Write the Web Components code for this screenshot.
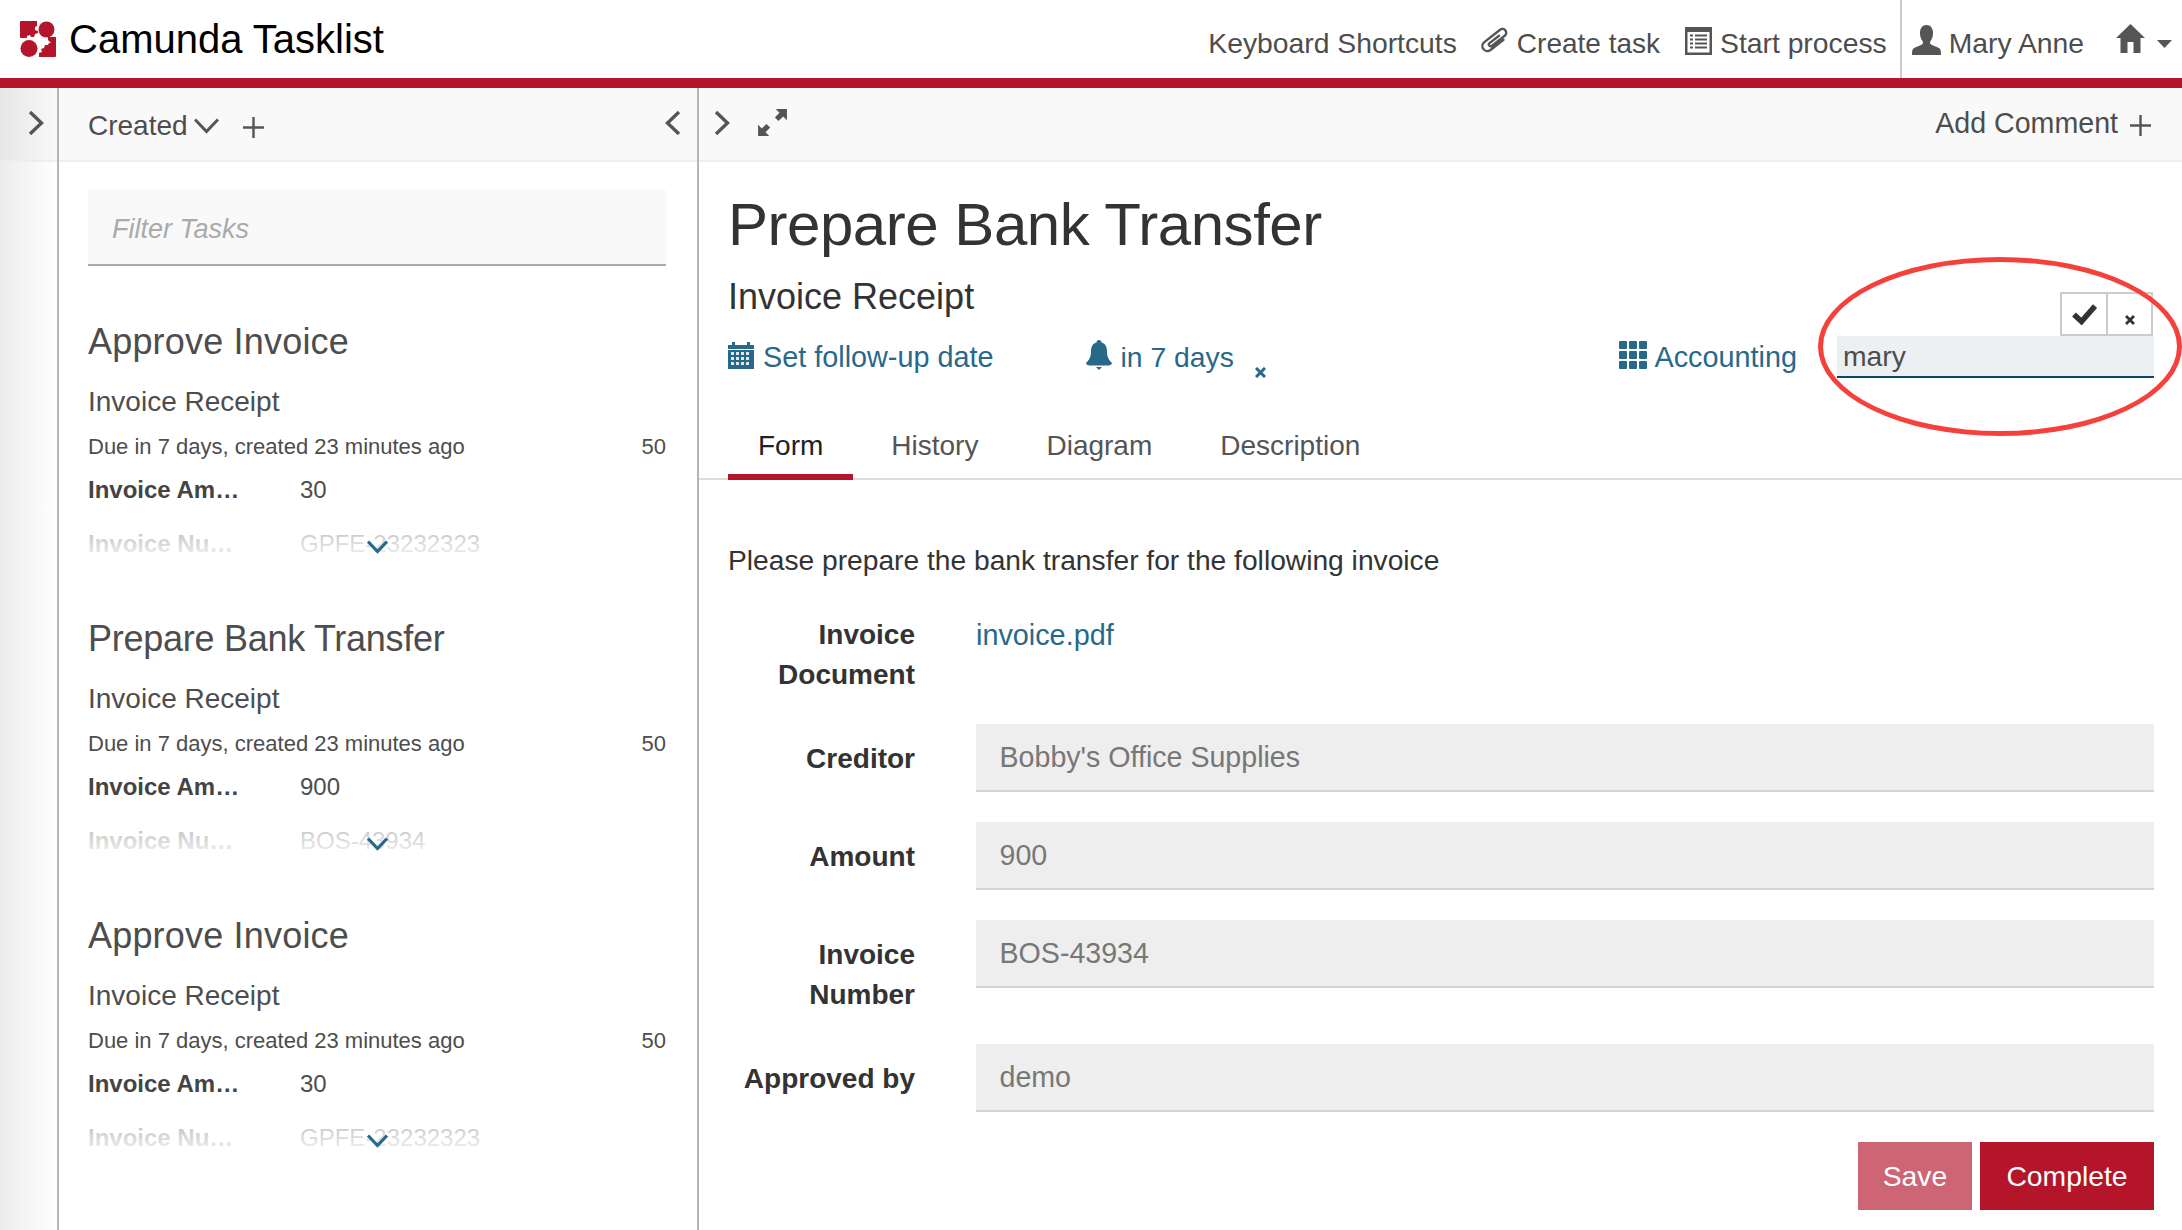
<!DOCTYPE html>
<html lang="en">
<head>
<meta charset="utf-8">
<title>Camunda Tasklist</title>
<style>
    html, body { margin: 0; height: 100%; }
    body {
        width: 2182px;
        height: 1230px;
        overflow: hidden;
        font-family: "Liberation Sans", Arial, sans-serif;
        font-size: 28.3px;
        color: #444;
        background: #fff;
    }
</style>
</head>
<body>
<cam-navbar></cam-navbar>
<cam-layout>
    <cam-tasklist slot="list">
        <cam-task-card name="Approve Invoice" track="0.19" amount="30" number="GPFE-23232323"></cam-task-card>
        <cam-task-card name="Prepare Bank Transfer" track="-0.27" amount="900" number="BOS-43934"></cam-task-card>
        <cam-task-card name="Approve Invoice" track="0.19" amount="30" number="GPFE-23232323"></cam-task-card>
    </cam-tasklist>
    <cam-task-detail slot="detail">
        <cam-field label="Invoice<br>Document" link="invoice.pdf"></cam-field>
        <cam-field label="Creditor" value="Bobby's Office Supplies"></cam-field>
        <cam-field label="Amount" value="900"></cam-field>
        <cam-field label="Invoice<br>Number" value="BOS-43934"></cam-field>
        <cam-field label="Approved by" value="demo"></cam-field>
    </cam-task-detail>
</cam-layout>

<script>
const RED = "#b5152b";
const LINK = "#28698a";

const ICONS = {
    logo: `<svg width="36" height="36" viewBox="0 0 36 36"><path fill="${RED}" d="M1 0h16v5l-2 1v3l3 1v2l-3 1-1 3h-3l-1-2-3 1v2H1a1 1 0 0 1-1-1V1a1 1 0 0 1 1-1z"/><circle cx="26.500" cy="8.500" r="8" fill="${RED}"/><circle cx="9" cy="27.500" r="8.500" fill="${RED}"/><path fill="${RED}" d="M28 16h8v19a1 1 0 0 1-1 1H19v-4l3-1-1-3 3-1 1-3h3l1-2 2 0-3-3z"/></svg>`,
    clip: `<svg width="31" height="31" viewBox="0 0 31 31"><g transform="rotate(52 15.500 15.500)" fill="none" stroke="#555" stroke-width="2.400" stroke-linecap="round"><path d="M20.500 8v16.500a5 5 0 0 1-10 0V4.500a3.800 3.800 0 0 1 7.600 0V21a1.800 1.800 0 0 1-3.600 0V9"/></g></svg>`,
    list: `<svg width="27" height="28" viewBox="0 0 27 28"><rect width="27" height="28" fill="#555"/><rect x="2.500" y="5" width="22" height="20.500" fill="#fff"/><g fill="#555"><rect x="5" y="7.500" width="3" height="2"/><rect x="5" y="11.500" width="3" height="2"/><rect x="5" y="15.500" width="3" height="2"/><rect x="5" y="19.500" width="3" height="2"/><rect x="10" y="7.500" width="12" height="2"/><rect x="10" y="11.500" width="12" height="2"/><rect x="10" y="15.500" width="12" height="2"/><rect x="10" y="19.500" width="12" height="2"/></g></svg>`,
    user: `<svg width="29" height="30" viewBox="0 0 31 30" preserveAspectRatio="none"><path fill="#555" d="M15.500 0c4.500 0 7 3.500 7 8 0 3.500-1.300 6.500-2.800 8.300-.6.800-.5 2.400.3 3 1.800 1.300 7 2.500 9.500 4.200 1 .7 1.500 2.500 1.500 6.500H0c0-4 .5-5.800 1.500-6.500 2.500-1.700 7.700-2.900 9.500-4.200.8-.6.900-2.200.3-3C9.800 14.500 8.500 11.500 8.500 8c0-4.500 2.500-8 7-8z"/></svg>`,
    home: `<svg width="29" height="29" viewBox="0 0 29 29"><path fill="#555" d="M14.500 0 29 14h-4.500v15H17.500V18h-6v11H4.500V14H0z"/></svg>`,
    caret: `<svg width="15" height="8" viewBox="0 0 15 8"><path fill="#555" d="M0 0h15L7.500 8z"/></svg>`,
    right: `<svg width="16" height="24" viewBox="0 0 16 24"><path fill="none" stroke="#555" stroke-width="3.400" d="M2 1l11.500 11L2 23"/></svg>`,
    left: `<svg width="16" height="24" viewBox="0 0 16 24"><path fill="none" stroke="#555" stroke-width="3.400" d="M14 1 2.500 12 14 23"/></svg>`,
    down: `<svg width="25" height="16" viewBox="0 0 25 16"><path fill="none" stroke="#555" stroke-width="3" d="M1 1.500l11.500 12 11.500-12"/></svg>`,
    plus: `<svg width="21" height="21" viewBox="0 0 21 21"><path fill="none" stroke="#555" stroke-width="2.400" d="M10.500 0v21M0 10.500h21"/></svg>`,
    expand: `<svg width="29" height="27" viewBox="0 0 31 29"><g fill="#555"><path d="M31 0v12l-4-4-5 5-4-4 5-5-4-4z"/><path d="M0 29V17l4 4 5-5 4 4-5 5 4 4z"/></g></svg>`,
    calendar: `<svg width="26" height="28" viewBox="0 0 26 28"><path fill="${LINK}" d="M0 4h4V1h3v3h12V1h3v3h4v4H0z"/><path fill="${LINK}" d="M0 9h26v19H0z"/><g fill="#fff" opacity=".85"><rect x="3" y="11" width="3" height="3"/><rect x="8" y="11" width="3" height="3"/><rect x="13" y="11" width="3" height="3"/><rect x="18" y="11" width="3" height="3"/><rect x="3" y="16" width="3" height="3"/><rect x="8" y="16" width="3" height="3"/><rect x="13" y="16" width="3" height="3"/><rect x="18" y="16" width="3" height="3"/><rect x="3" y="21" width="3" height="3"/><rect x="8" y="21" width="3" height="3"/><rect x="13" y="21" width="3" height="3"/><rect x="18" y="21" width="3" height="3"/></g></svg>`,
    bell: `<svg width="26" height="30" viewBox="0 0 26 30"><path fill="${LINK}" d="M13 0c1.500 0 2.500 1 2.500 2.500 4 1 5.500 4.500 5.500 9 0 5 1.500 8 5 11.500 0 1-1 2-3 2.500H3c-2-.5-3-1.500-3-2.500C3.500 19.500 5 16.500 5 11.500c0-4.500 1.500-8 5.500-9C10.500 1 11.500 0 13 0z"/><path fill="${LINK}" d="M10 27h6l-3 3z"/></svg>`,
    grid: `<svg width="28" height="28" viewBox="0 0 28 28"><g fill="${LINK}"><rect width="8" height="8" rx="1"/><rect x="10" width="8" height="8" rx="1"/><rect x="20" width="8" height="8" rx="1"/><rect y="10" width="8" height="8" rx="1"/><rect x="10" y="10" width="8" height="8" rx="1"/><rect x="20" y="10" width="8" height="8" rx="1"/><rect y="20" width="8" height="8" rx="1"/><rect x="10" y="20" width="8" height="8" rx="1"/><rect x="20" y="20" width="8" height="8" rx="1"/></g></svg>`,
    "x-link": `<svg width="11" height="11" viewBox="0 0 11 11"><path fill="none" stroke="${LINK}" stroke-width="3" d="M1 1l9 9M10 1l-9 9"/></svg>`,
    check: `<svg width="25" height="21" viewBox="0 0 25 21"><path fill="none" stroke="#333" stroke-width="5.500" d="M2 10.500l7.500 7L23 2"/></svg>`,
    x: `<svg width="10" height="10" viewBox="0 0 10 10"><path fill="none" stroke="#333" stroke-width="2.800" d="M1 1l8 8M9 1L1 9"/></svg>`,
    "chevron-teal": `<svg width="21" height="14" viewBox="0 0 21 14"><path fill="none" stroke="${LINK}" stroke-width="3.200" d="M1 1.500l9.500 10 9.500-10"/></svg>`
};

class CamIcon extends HTMLElement
{
    connectedCallback() {
        if (this.shadowRoot) return;
        const Shadow = this.attachShadow({mode: "open"});
        Shadow.innerHTML = `
            <style>
                :host { display: inline-flex; flex: none; }
                svg { display: block; }
            </style>
            ${ICONS[this.getAttribute("name")]}
        `;
    }
}

class Navbar extends HTMLElement
{
    constructor() {
        super();
        const Shadow = this.attachShadow({mode: "open"});
        Shadow.innerHTML = `
            <style>
                :host {
                    display: flex;
                    align-items: center;
                    height: 78px;
                    border-bottom: 10px solid ${RED};
                    background: #fff;
                }
                .brand { display: flex; align-items: center; padding-left: 20px; gap: 13px; }
                .title { font-size: 40px; color: #000; line-height: 78px; }
                .menu {
                    display: flex;
                    align-items: stretch;
                    height: 100%;
                    margin-left: auto;
                    padding-right: 10px;
                    color: #4d4d4d;
                }
                .item { display: flex; align-items: center; padding-top: 9px; box-sizing: border-box; white-space: nowrap; }
                .clip { margin-left: 22px; gap: 7px; font-size: 28px; }
                .proc { margin-left: 25px; gap: 8px; }
                .proc cam-icon, .clip cam-icon { position: relative; top: -3px; }
                .user { margin-left: 13px; border-left: 2px solid #ccc; padding-left: 10px; gap: 8px; }
                .user cam-icon { position: relative; top: -4px; }
                .home { margin-left: 32px; gap: 12px; }
                .home cam-icon:first-child { position: relative; top: -5px; }
            </style>
            <div class="brand"><cam-icon name="logo"></cam-icon><span class="title">Camunda Tasklist</span></div>
            <div class="menu">
                <div class="item">Keyboard Shortcuts</div>
                <div class="item clip"><cam-icon name="clip"></cam-icon>Create task</div>
                <div class="item proc"><cam-icon name="list"></cam-icon>Start process</div>
                <div class="item user"><cam-icon name="user"></cam-icon>Mary Anne</div>
                <div class="item home"><cam-icon name="home"></cam-icon><cam-icon name="caret"></cam-icon></div>
            </div>
        `;
    }
}

class Layout extends HTMLElement
{
    constructor() {
        super();
        const Shadow = this.attachShadow({mode: "open"});
        Shadow.innerHTML = `
            <style>
                :host { display: flex; height: 1142px; overflow: hidden; }
                .strip {
                    flex: none;
                    width: 57px;
                    border-right: 2px solid #b4b4b4;
                    background: linear-gradient(to right, #ececec, #fff);
                }
                .strip-bar {
                    display: flex;
                    align-items: center;
                    height: 72px;
                    padding-left: 28px;
                    border-bottom: 2px solid #eee;
                    box-sizing: content-box;
                    width: 29px;
                    background: linear-gradient(to right, #e6e6e6, #f9f9f9);
                }
                .strip-bar cam-icon { margin-top: -2px; }
                ::slotted([slot=list]) { flex: none; width: 638px; border-right: 2px solid #b4b4b4; }
                ::slotted([slot=detail]) { flex: 1; min-width: 0; }
            </style>
            <div class="strip"><div class="strip-bar"><cam-icon name="right"></cam-icon></div></div>
            <slot name="list"></slot>
            <slot name="detail"></slot>
        `;
    }
}

class Tasklist extends HTMLElement
{
    constructor() {
        super();
        const Shadow = this.attachShadow({mode: "open"});
        Shadow.innerHTML = `
            <style>
                :host { display: block; height: 1142px; overflow: hidden; }
                .bar {
                    display: flex;
                    align-items: center;
                    height: 72px;
                    padding: 0 16px 0 29px;
                    border-bottom: 2px solid #eee;
                    background: #f9f9f9;
                    color: #4d4d4d;
                }
                .created { padding-top: 4px; font-size: 28px; }
                .down { margin-left: 6px; margin-top: 3px; }
                .plus { margin-left: 24px; margin-top: 6px; }
                .left { margin-left: auto; margin-top: -2px; }
                .content { padding: 28px 31px 0 29px; }
                .filter {
                    height: 70px;
                    line-height: 70px;
                    padding: 4px 0 0 24px;
                    margin-bottom: 56px;
                    background: #f9f9f9;
                    border-bottom: 2px solid #aaa;
                    color: #aaa;
                    font-size: 27px;
                    font-style: italic;
                }
            </style>
            <div class="bar">
                <span class="created">Created</span>
                <cam-icon class="down" name="down"></cam-icon>
                <cam-icon class="plus" name="plus"></cam-icon>
                <cam-icon class="left" name="left"></cam-icon>
            </div>
            <div class="content">
                <div class="filter">Filter Tasks</div>
                <slot></slot>
            </div>
        `;
    }
}

class TaskCard extends HTMLElement
{
    connectedCallback() {
        if (this.shadowRoot) return;
        const Shadow = this.attachShadow({mode: "open"});
        Shadow.innerHTML = `
            <style>
                :host { display: block; position: relative; height: 297px; overflow: hidden; color: #4d4d4d; }
                h3 { margin: 0; font-size: 36px; font-weight: normal; line-height: 40px; letter-spacing: ${this.getAttribute("track")}px; }
                .process { margin-top: 20px; line-height: 40px; font-size: 28px; }
                .meta { display: flex; justify-content: space-between; margin-top: 9px; font-size: 22px; line-height: 32px; }
                .var { display: grid; grid-template-columns: 212px 1fr; font-size: 24px; line-height: 32px; margin-top: 11px; }
                .var + .var { margin-top: 22px; }
                .var b { color: #444; }
                .fade {
                    position: absolute;
                    left: 0;
                    right: 0;
                    top: 184px;
                    height: 60px;
                    background: linear-gradient(to bottom, rgba(255,255,255,.35), rgba(255,255,255,.68) 40%, #fff);
                }
                .more { position: absolute; left: 279px; top: 218px; }
            </style>
            <h3>${this.getAttribute("name")}</h3>
            <div class="process">Invoice Receipt</div>
            <div class="meta"><span>Due in 7 days, created 23 minutes ago</span><span>50</span></div>
            <div class="var"><b>Invoice Am…</b><span>${this.getAttribute("amount")}</span></div>
            <div class="var"><b>Invoice Nu…</b><span>${this.getAttribute("number")}</span></div>
            <div class="fade"></div>
            <cam-icon class="more" name="chevron-teal"></cam-icon>
        `;
    }
}

class TaskDetail extends HTMLElement
{
    constructor() {
        super();
        const Shadow = this.attachShadow({mode: "open"});
        Shadow.innerHTML = `
            <style>
                :host { display: block; position: relative; height: 1142px; overflow: hidden; color: #333; }
                a { color: ${LINK}; text-decoration: none; }
                .bar {
                    display: flex;
                    align-items: center;
                    height: 72px;
                    padding: 0 31px 0 15px;
                    border-bottom: 2px solid #eee;
                    background: #f9f9f9;
                    color: #4d4d4d;
                }
                .bar .left { margin-top: -2px; }
                .expand { margin-left: 28px; margin-top: -4px; }
                .add { margin-left: auto; margin-top: -1px; font-size: 28.6px; }
                .bar .plus { margin-left: 12px; margin-top: 2px; }
                .content { padding: 30px 28px 0 29px; }
                h1 { margin: 0; font-size: 60px; line-height: 66px; font-weight: normal; letter-spacing: -0.47px; }
                h2 { margin: 19px 0 0; font-size: 36px; line-height: 40px; font-weight: normal; }
                .links { display: flex; align-items: center; height: 42px; margin-top: 19px; font-size: 28.8px; }
                .link { display: flex; align-items: center; gap: 8px; color: ${LINK}; white-space: nowrap; }
                .link cam-icon { margin-top: -4px; }
                .link:first-child { gap: 9px; }
                .bell { margin-left: 92px; gap: 9px; font-size: 28.3px; }
                .clear { align-self: flex-end; margin-left: 21px; margin-bottom: 0; }
                .group { margin-left: auto; }
                .assignee {
                    position: relative;
                    flex: none;
                    width: 311px;
                    margin-left: 40px;
                    padding-left: 6px;
                    height: 40px;
                    line-height: 41px;
                    background: #ecf0f3;
                    border-bottom: 2px solid #0c4a63;
                    color: #4d4d4d;
                    font-size: 28.3px;
                }
                .actions {
                    position: absolute;
                    right: 1px;
                    bottom: 40px;
                    display: flex;
                    height: 40px;
                    border: 2px solid #ccc;
                    background: #fff;
                }
                .actions div { display: flex; align-items: center; justify-content: center; width: 44px; }
                .actions div + div { border-left: 2px solid #ccc; padding-top: 12px; box-sizing: border-box; width: 45px; }
                .tabs {
                    display: flex;
                    gap: 8px;
                    margin: 40px -28px 0 -29px;
                    padding-left: 29px;
                    border-bottom: 2px solid #ddd;
                    height: 60px;
                    font-size: 28px;
                }
                .tab { padding: 8px 30px 0; line-height: 40px; height: 62px; box-sizing: border-box; color: #555; }
                .tab.active { color: #222; border-bottom: 6px solid ${RED}; }
                .intro { margin: 60px 0 34px; line-height: 40px; font-size: 28.2px; }
                .fields { display: flex; flex-direction: column; gap: 30px; }
                .buttons { display: flex; justify-content: flex-end; gap: 8px; margin-top: 30px; }
                .btn { width: 174px; text-align: center; height: 68px; line-height: 68px; color: #fff; background: ${RED}; }
                .btn.save { width: 114px; background: #cd6574; }
                .mark {
                    position: absolute;
                    left: 1119px;
                    top: 169px;
                    width: 364px;
                    height: 179px;
                    box-sizing: border-box;
                    border: 5.500px solid #f6403c;
                    border-radius: 50%;
                    pointer-events: none;
                }
            </style>
            <div class="bar">
                <cam-icon class="left" name="right"></cam-icon>
                <cam-icon class="expand" name="expand"></cam-icon>
                <span class="add">Add Comment</span>
                <cam-icon class="plus" name="plus"></cam-icon>
            </div>
            <div class="content">
                <h1>Prepare Bank Transfer</h1>
                <h2>Invoice Receipt</h2>
                <div class="links">
                    <div class="link"><cam-icon name="calendar"></cam-icon>Set follow-up date</div>
                    <div class="link bell"><cam-icon name="bell"></cam-icon>in 7 days</div>
                    <cam-icon class="clear" name="x-link"></cam-icon>
                    <div class="link group"><cam-icon name="grid"></cam-icon>Accounting</div>
                    <div class="assignee">mary
                        <div class="actions">
                            <div><cam-icon name="check"></cam-icon></div>
                            <div><cam-icon name="x"></cam-icon></div>
                        </div>
                    </div>
                </div>
                <div class="tabs">
                    <div class="tab active">Form</div>
                    <div class="tab">History</div>
                    <div class="tab">Diagram</div>
                    <div class="tab">Description</div>
                </div>
                <div class="intro">Please prepare the bank transfer for the following invoice</div>
                <div class="fields"><slot></slot></div>
                <div class="buttons">
                    <div class="btn save">Save</div>
                    <div class="btn">Complete</div>
                </div>
            </div>
            <div class="mark"></div>
        `;
    }
}

class Field extends HTMLElement
{
    connectedCallback() {
        if (this.shadowRoot) return;
        const Shadow = this.attachShadow({mode: "open"});
        const link = this.getAttribute("link");
        Shadow.innerHTML = `
            <style>
                :host { display: grid; grid-template-columns: 187px 1fr; column-gap: 61px; align-items: start; }
                label {
                    display: block;
                    text-align: right;
                    font-size: 28px;
                    font-weight: bold;
                    line-height: 40px;
                    padding-top: ${link ? 1 : 15}px;
                    margin-bottom: -1px;
                    color: #333;
                }
                a { color: ${LINK}; font-size: 28.8px; line-height: 42px; text-decoration: none; }
                .value {
                    height: 66px;
                    line-height: 67px;
                    padding-left: 23.500px;
                    background: #eee;
                    border-bottom: 2px solid #d4d4d4;
                    color: #777;
                    font-size: 28.6px;
                }
            </style>
            <label>${this.getAttribute("label")}</label>
            ${link ? `<a>${link}</a>` : `<div class="value">${this.getAttribute("value")}</div>`}
        `;
    }
}

customElements.define("cam-icon", CamIcon);
customElements.define("cam-navbar", Navbar);
customElements.define("cam-layout", Layout);
customElements.define("cam-tasklist", Tasklist);
customElements.define("cam-task-card", TaskCard);
customElements.define("cam-task-detail", TaskDetail);
customElements.define("cam-field", Field);
</script>
</body>
</html>
